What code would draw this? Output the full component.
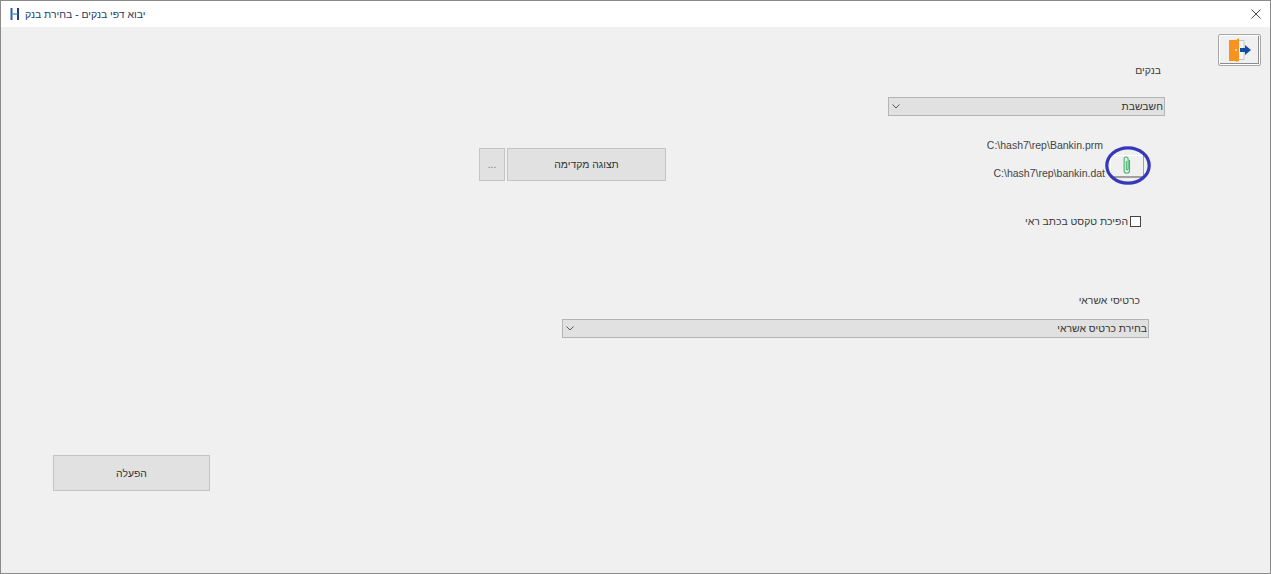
<style>
:global(body){margin:0;background:#f0f0f0}
.win{box-sizing:border-box;width:1271px;height:574px;border:1px solid #8a8a8a;display:flex;flex-direction:column;font-family:"Liberation Sans",sans-serif;font-size:10.4px;color:#3a3a3a;background:#f0f0f0;overflow:hidden}
.title{height:26px;flex:none;background:#fff;display:flex;align-items:center;padding:0 9px;gap:5px}
.title-text{direction:rtl;color:#1f3864;font-size:10.4px}
.close{margin-left:auto;display:flex}
.form{flex:1;display:flex;flex-direction:column}
.row{display:flex;justify-content:flex-end;align-items:center;flex:none}
.r-exit{height:32px;margin-top:7px;padding-right:9px}
.exit{box-sizing:border-box;width:43px;height:32px;background:#f0f0f0;border:1px solid #a8a8a8;border-radius:2px;box-shadow:inset 0 0 0 1px #fff,inset -1px -1px 0 1px #8c8c8c;display:flex;align-items:center;justify-content:center;padding:0}
.r-lab1{height:14px;margin-top:-3px;padding-right:109px}
.lab{direction:rtl}
.r-sel1{margin-top:20px;padding-right:105px}
.sel{box-sizing:border-box;height:19px;background:#e1e1e1;border:1px solid #b4b4b4;display:flex;align-items:center;justify-content:space-between;padding:0 0 0 3px;color:#333}
.sel1{width:277px}
.sel2{width:587px}
.sel span{direction:rtl;padding-right:1px}
.r-files{height:46px;margin-top:20px;justify-content:flex-start;padding-left:478px}
.btns{display:flex;gap:2px;margin-top:11px}
.btn{box-sizing:border-box;background:#e1e1e1;border:1px solid #c4c4c4;font:inherit;color:#333;padding:0;direction:rtl}
.dots{width:26px;height:33px;color:#777}
.prev{width:159px;height:33px}
.files{margin-left:auto;display:flex;align-items:center;padding-right:126px;gap:5px}
.paths{display:flex;flex-direction:column;align-items:flex-end;gap:16px;font-size:10.5px;color:#444}
.p1{padding-right:2px}
.clipwrap{position:relative;display:flex;margin-top:14px}
.clip{box-sizing:border-box;width:34px;height:23px;background:#f0f0f0;border:0;border-bottom:2px solid #a0a0a0;border-right:1px solid #a0a0a0;box-shadow:inset 1px 1px 0 #fff;display:flex;align-items:center;justify-content:center;padding:0}
.ring{position:absolute;left:-5px;top:-9px;width:46px;height:39px;pointer-events:none}
.r-check{margin-top:29px;height:20px;padding-right:129px;gap:2px}
.lab-c{direction:rtl}
.box{box-sizing:border-box;width:11px;height:11px;border:1px solid #444;background:#fff}
.r-lab2{margin-top:61px;height:16px;padding-right:130px}
.r-sel2{margin-top:11px;padding-right:121px}
.r-run{margin-top:117px;justify-content:flex-start;padding-left:52px}
.run{width:157px;height:36px}
</style>

<div class="win">
  <div class="title">
    <svg width="10" height="14" viewBox="0 0 10 14"><path d="M1.500 1v12" stroke="#2d5fa8" stroke-width="2"/><path d="M8 1v12" stroke="#1f3c80" stroke-width="2"/><path d="M2.500 7h5" stroke="#4aa0c8" stroke-width="1.500"/></svg>
    <span class="title-text">יבוא דפי בנקים - בחירת בנק</span>
    <span class="close"><svg width="10" height="10" viewBox="0 0 10 10"><path d="M.5.500l9 9M9.500.500l-9 9" stroke="#444" fill="none"/></svg></span>
  </div>
  <div class="form">
    <div class="row r-exit">
      <button class="exit" aria-label="יציאה">
        <svg width="22" height="26" viewBox="0 0 22 26">
          <path d="M9 3.500h6v19H9" fill="#f7f7f7" stroke="#c4c4c4"/>
          <path d="M0 3h7l3-2v23l-3 1v-1H0z" fill="#f7931e"/>
          <rect x="6" y="12" width="2" height="2" fill="#ffd9a8"/>
          <path d="M11 11h5V8l6 5-6 5v-3h-5z" fill="#0f4fa8"/>
        </svg>
      </button>
    </div>
    <div class="row r-lab1"><span class="lab">בנקים</span></div>
    <div class="row r-sel1">
      <div class="sel sel1">
        <svg width="8" height="5" viewBox="0 0 8 5"><path d="M.5.500 4 4 7.500.500" stroke="#555" fill="none"/></svg>
        <span>חשבשבת</span>
      </div>
    </div>
    <div class="row r-files">
      <div class="btns">
        <button class="btn dots">...</button>
        <button class="btn prev">תצוגה מקדימה</button>
      </div>
      <div class="files">
        <div class="paths">
          <span class="p1">C:\hash7\rep\Bankin.prm</span>
          <span>C:\hash7\rep\bankin.dat</span>
        </div>
        <div class="clipwrap">
          <button class="clip" aria-label="צרף">
            <svg width="10" height="20" viewBox="0 0 10 20"><path d="M7.500 5v10.500a2.700 2.700 0 0 1-5.400 0V4a2 2 0 0 1 4 0v10a.9.900 0 0 1-1.800 0V6" fill="none" stroke="#3fb56a" stroke-width="1.100"/></svg>
          </button>
          <svg class="ring" viewBox="0 0 46 39"><ellipse cx="23" cy="19.500" rx="21.200" ry="17.700" fill="none" stroke="#3538b8" stroke-width="3.200"/></svg>
        </div>
      </div>
    </div>
    <div class="row r-check">
      <span class="lab-c">הפיכת טקסט בכתב ראי</span>
      <span class="box"></span>
    </div>
    <div class="row r-lab2"><span class="lab">כרטיסי אשראי</span></div>
    <div class="row r-sel2">
      <div class="sel sel2">
        <svg width="8" height="5" viewBox="0 0 8 5"><path d="M.5.500 4 4 7.500.500" stroke="#555" fill="none"/></svg>
        <span>בחירת כרטיס אשראי</span>
      </div>
    </div>
    <div class="row r-run"><button class="btn run">הפעלה</button></div>
  </div>
</div>
